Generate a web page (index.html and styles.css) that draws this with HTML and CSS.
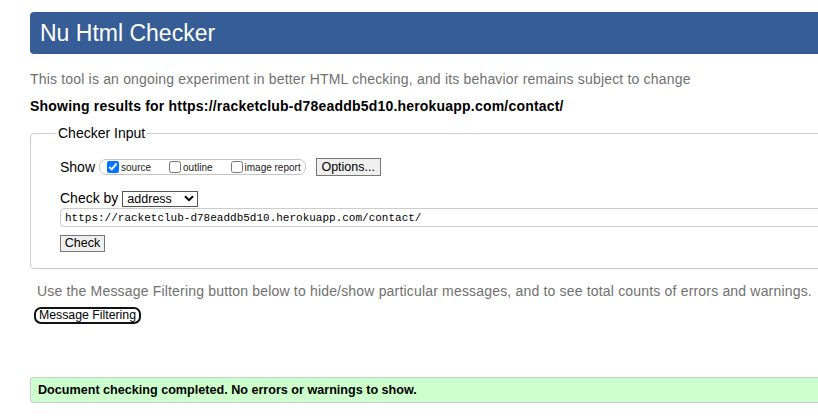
FILE: index.html
```html
<!DOCTYPE html>
<html lang="en">
<head>
<meta charset="utf-8">
<title>Nu Html Checker</title>
<link rel="stylesheet" href="styles.css">
</head>
<body>
<div class="page">
  <h1 class="title">Nu Html Checker</h1>
  <p class="about">This tool is an ongoing experiment in better HTML checking, and its behavior remains subject to change</p>
  <p class="showing">Showing results for https://racketclub-d78eaddb5d10.herokuapp.com/contact/</p>
  <form class="checker">
    <fieldset class="checker-input">
      <legend class="checker-legend">Checker Input</legend>
      <div class="show-row">
        <span class="label">Show</span>
        <span class="show-group">
          <label class="opt"><input type="checkbox" class="cb" checked>source</label>
          <label class="opt"><input type="checkbox" class="cb">outline</label>
          <label class="opt"><input type="checkbox" class="cb">image report</label>
        </span>
        <button type="button" class="btn btn-options">Options...</button>
      </div>
      <div class="checkby-row">
        <span class="label">Check by</span>
        <span class="select-wrap">
          <select class="select"><option>address</option></select>
          <svg class="chev" width="10" height="7" viewBox="0 0 10 7"><path d="M1 1.2 L5 5.2 L9 1.2" fill="none" stroke="#000" stroke-width="2"/></svg>
        </span>
      </div>
      <input class="url" type="text" value="https://racketclub-d78eaddb5d10.herokuapp.com/contact/">
      <div class="check-row"><button type="button" class="btn btn-check">Check</button></div>
    </fieldset>
  </form>
  <div class="filter">
    <p class="filter-text">Use the Message Filtering button below to hide/show particular messages, and to see total counts of errors and warnings.</p>
    <button type="button" class="btn-filter">Message Filtering</button>
  </div>
  <div class="success">Document checking completed. No errors or warnings to show.</div>
</div>
</body>
</html>
```

FILE: styles.css
```css
html, body {
  margin: 0;
  padding: 0;
  background: #fff;
  overflow: hidden;
}
body {
  font-family: "Liberation Sans", Arial, sans-serif;
  font-size: 14px;
  color: #000;
}
.page {
  width: 1100px;
  padding: 12px 0 0 30px;
}
.title {
  margin: 0;
  height: 42px;
  line-height: 42px;
  padding-left: 10px;
  background: #365d95;
  color: #fff;
  font-size: 23px;
  font-weight: normal;
  border-radius: 4px 0 0 4px;
}
.about {
  margin: 17px 0 0 0;
  line-height: 16px;
  color: #707070;
  letter-spacing: 0.18px;
}
.showing {
  margin: 11px 0 0 0;
  line-height: 16px;
  font-weight: bold;
  letter-spacing: 0.2px;
}
.checker {
  margin: 11px 0 0 0;
}
.checker-input {
  margin: 0;
  border: 1px solid #cccccc;
  border-radius: 4px;
  padding: 17px 0 16px 29px;
  min-width: 0;
}
.checker-legend {
  margin-left: -4px;
  padding: 0 2px;
  line-height: 16px;
  font-size: 14px;
}
.show-row {
  display: flex;
  align-items: center;
  height: 18px;
}
.label {
  line-height: 16px;
}
.show-group {
  display: flex;
  align-items: center;
  height: 14px;
  margin-left: 4px;
  padding: 0 4px 0 7px;
  border: 1px solid #c4c4c4;
  border-radius: 7px;
  font-size: 10px;
  color: #222;
}
.opt {
  display: flex;
  align-items: center;
  margin-right: 18px;
  line-height: 12px;
  padding-top: 1px;
}
.opt:last-child {
  margin-right: 0;
}
.cb {
  width: 12px;
  height: 12px;
  margin: -1px 2px 0 0;
}
.btn {
  font-family: "Liberation Sans", Arial, sans-serif;
  font-size: 12px;
  color: #000;
  background: #efefef;
  border: 1px solid #767676;
  border-radius: 0;
  padding: 0;
  height: 17px;
  line-height: 15px;
}
.btn-options {
  margin-left: 10px;
  width: 65px;
  height: 18px;
  font-size: 12.5px;
}
.checkby-row {
  display: flex;
  align-items: center;
  margin-top: 14px;
  height: 16px;
}
.select-wrap {
  position: relative;
  display: inline-block;
  margin-left: 4px;
  height: 16px;
}
.select {
  appearance: none;
  -webkit-appearance: none;
  width: 76px;
  height: 16px;
  border: 1px solid #555;
  border-radius: 0;
  background: #fff;
  padding: 0 0 0 4px;
  margin: 0;
  font-family: "Liberation Sans", Arial, sans-serif;
  font-size: 12.5px;
  line-height: 14px;
  color: #000;
}
.chev {
  position: absolute;
  left: 62px;
  top: 5px;
  pointer-events: none;
}
.url {
  display: block;
  box-sizing: border-box;
  margin: 2px 0 0 0;
  width: 1100px;
  height: 19px;
  border: 1px solid #cccccc;
  border-radius: 4px;
  padding: 0 4px;
  font-family: "Liberation Mono", "DejaVu Sans Mono", monospace;
  font-size: 11px;
  color: #000;
  outline: none;
}
.check-row {
  margin-top: 8px;
  height: 17px;
  display: flex;
}
.btn-check {
  width: 45px;
  font-size: 12.5px;
}
.filter {
  margin-top: 14px;
  padding-left: 4px;
}
.filter-text {
  margin: 0 0 0 3px;
  line-height: 16px;
  color: #707070;
  letter-spacing: 0.18px;
}
.btn-filter {
  display: block;
  margin-top: 8px;
  height: 17px;
  width: 107px;
  padding: 0;
  font-family: "Liberation Sans", Arial, sans-serif;
  font-size: 12.3px;
  line-height: 13px;
  color: #000;
  background: #fff;
  border: 2px solid #111;
  border-radius: 7px;
}
.success {
  margin-top: 53px;
  height: 24px;
  line-height: 24px;
  padding-left: 7px;
  background: #ccffcc;
  border: 1px solid #cccccc;
  border-radius: 3px;
  font-weight: bold;
  font-size: 12.6px;
}
```
